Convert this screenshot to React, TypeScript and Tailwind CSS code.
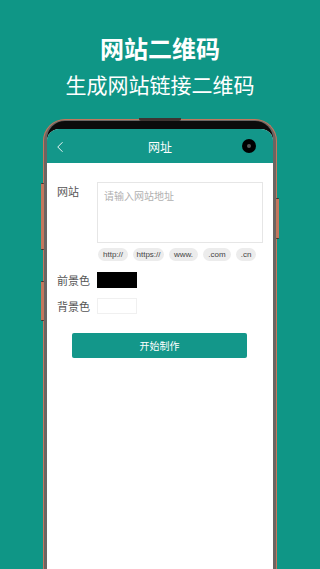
import { ChevronLeft } from "lucide-react";

const chips = [
  { label: "http://", w: "w-[30px]" },
  { label: "https://", w: "w-[31px]" },
  { label: "www.", w: "w-[29px]" },
  { label: ".com", w: "w-[28px]" },
  { label: ".cn", w: "w-[20px]" },
];

export default function App() {
  return (
    <div
      className="flex h-[569px] w-[320px] flex-col items-center overflow-hidden bg-[#0f9686] text-white"
      style={{ fontFamily: '"Noto Sans CJK SC", "Noto Sans", sans-serif' }}
    >
      {/* Heading */}
      <h1 className="pt-[36px] text-[24px] font-bold leading-[24px]">网站二维码</h1>
      <p className="mt-[12px] text-[21px] leading-[24px]">生成网站链接二维码</p>

      {/* Phone */}
      <div className="relative mt-[23px] flex w-[234px] flex-1 flex-col rounded-t-[22px] border-[1.5px] border-b-0 border-[#c4775d] bg-[#6b6562] px-[3px] pt-[1px]">
        <div className="absolute left-1/2 top-[-2px] h-[3px] w-[42px] -translate-x-1/2 rounded-b-[2px] bg-[#3d3431]" />
        <div className="absolute left-[-3px] top-[63px] h-[67px] w-[3px] rounded-[1px] border-y border-[#3d3431] bg-[#c4775d]" />
        <div className="absolute left-[-3px] top-[161px] h-[40px] w-[3px] rounded-[1px] border-y border-[#3d3431] bg-[#c4775d]" />
        <div className="absolute right-[-3px] top-[78px] h-[41px] w-[3px] rounded-[1px] border-y border-[#3d3431] bg-[#c4775d]" />

        <div className="flex flex-1 flex-col rounded-t-[18px] bg-[#0b0b0b] pt-[8px]">
          <div className="flex flex-1 flex-col overflow-hidden rounded-t-[12px] bg-white">
            {/* Header */}
            <div className="relative flex h-[34px] items-center justify-center bg-[#13978a]">
              <ChevronLeft
                size={18}
                strokeWidth={1.2}
                className="absolute left-[4px] top-[9px] text-white"
              />
              <span className="pt-[2px] text-[12px] leading-[16px]">网址</span>
              <div className="absolute right-[17px] top-[10px] flex h-[14px] w-[14px] items-center justify-center rounded-full bg-black">
                <div className="h-[4px] w-[4px] rounded-full bg-[#555]" />
              </div>
            </div>

            {/* Form */}
            <div className="flex flex-col pl-[10px] pt-[19px] text-[#555]">
              <div className="flex">
                <span className="w-[40px] shrink-0 pt-[2px] text-[11px] leading-[14px]">网站</span>
                <div className="flex flex-col">
                  <div className="h-[61px] w-[166px] border border-[#e6e6e6] px-[6px] pt-[6px] text-[10px] leading-[14px] text-[#b0b0b0]">
                    请输入网站地址
                  </div>
                  <div className="ml-[1px] mt-[5px] flex gap-[5px]">
                    {chips.map((c) => (
                      <span
                        key={c.label}
                        className={`flex h-[13px] ${c.w} items-center justify-center rounded-full bg-[#ececec] text-[8px] leading-[10px] text-[#444]`}
                        style={{ fontFamily: '"Liberation Sans", sans-serif' }}
                      >
                        {c.label}
                      </span>
                    ))}
                  </div>
                </div>
              </div>

              <div className="mt-[11px] flex items-center">
                <span className="w-[40px] shrink-0 text-[11px] leading-[14px]">前景色</span>
                <div className="h-[16px] w-[40px] bg-black" />
              </div>

              <div className="mt-[10px] flex items-center">
                <span className="w-[40px] shrink-0 text-[11px] leading-[14px]">背景色</span>
                <div className="h-[16px] w-[40px] border border-[#f0f0f0] bg-white" />
              </div>

              <button className="ml-[15px] mt-[19px] flex h-[25px] w-[175px] items-center justify-center rounded-[2px] bg-[#13978a] text-[10px] text-white">
                开始制作
              </button>
            </div>
          </div>
        </div>
      </div>
    </div>
  );
}
